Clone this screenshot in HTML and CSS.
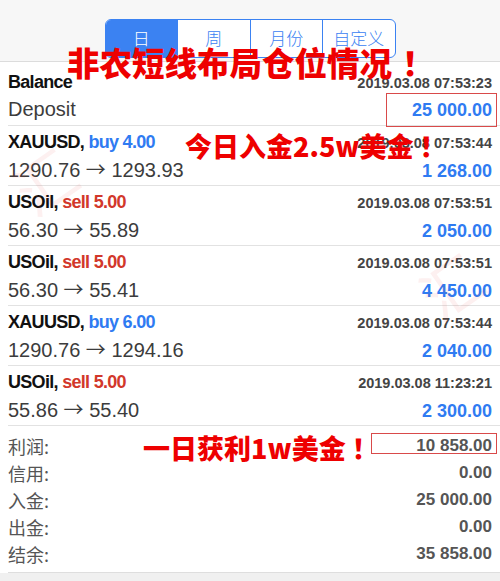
FILE: index.html
```html
<!DOCTYPE html>
<html lang="zh">
<head>
<meta charset="utf-8">
<title>History</title>
<link rel="stylesheet" href="styles.css">
</head>
<body>
<div class="screen">
  <header class="topbar">
    <div class="tabs">
      <div class="tab active">日</div>
      <div class="tab">周</div>
      <div class="tab">月份</div>
      <div class="tab">自定义</div>
    </div>
  </header>

  <div class="list">
    <div class="row row-first">
      <div class="line1"><span class="name">Balance</span><span class="date">2019.03.08 07:53:23</span></div>
      <div class="line2"><span class="desc">Deposit</span><span class="amount">25 000.00</span></div>
    </div>
    <div class="row">
      <div class="line1"><span class="name">XAUUSD, <span class="buy">buy 4.00</span></span><span class="date">2019.03.08 07:53:44</span></div>
      <div class="line2"><span class="desc">1290.76 <span class="arrow">→</span> 1293.93</span><span class="amount">1 268.00</span></div>
    </div>
    <div class="row">
      <div class="line1"><span class="name">USOil, <span class="sell">sell 5.00</span></span><span class="date">2019.03.08 07:53:51</span></div>
      <div class="line2"><span class="desc">56.30 <span class="arrow">→</span> 55.89</span><span class="amount">2 050.00</span></div>
    </div>
    <div class="row">
      <div class="line1"><span class="name">USOil, <span class="sell">sell 5.00</span></span><span class="date">2019.03.08 07:53:51</span></div>
      <div class="line2"><span class="desc">56.30 <span class="arrow">→</span> 55.41</span><span class="amount">4 450.00</span></div>
    </div>
    <div class="row">
      <div class="line1"><span class="name">XAUUSD, <span class="buy">buy 6.00</span></span><span class="date">2019.03.08 07:53:44</span></div>
      <div class="line2"><span class="desc">1290.76 <span class="arrow">→</span> 1294.16</span><span class="amount">2 040.00</span></div>
    </div>
    <div class="row">
      <div class="line1"><span class="name">USOil, <span class="sell">sell 5.00</span></span><span class="date">2019.03.08 11:23:21</span></div>
      <div class="line2"><span class="desc">55.86 <span class="arrow">→</span> 55.40</span><span class="amount">2 300.00</span></div>
    </div>
  </div>

  <div class="summary">
    <div class="srow"><span class="slabel">利润:</span><span class="svalue">10 858.00</span></div>
    <div class="srow"><span class="slabel">信用:</span><span class="svalue">0.00</span></div>
    <div class="srow"><span class="slabel">入金:</span><span class="svalue">25 000.00</span></div>
    <div class="srow"><span class="slabel">出金:</span><span class="svalue">0.00</span></div>
    <div class="srow"><span class="slabel">结余:</span><span class="svalue">35 858.00</span></div>
  </div>
  <div class="footer"></div>

  <span class="wm wm-left">汇</span>
  <span class="wm wm-right">汇</span>

  <div class="mark-box mark-box-deposit"></div>
  <div class="mark-box mark-box-profit"></div>
  <div class="note note-title">非农短线布局仓位情况<span class="bang bang-lg">！</span></div>
  <div class="note note-deposit">今日入金2.5w美金<span class="bang">！</span></div>
  <div class="note note-profit">一日获利1w美金<span class="bang">！</span></div>
</div>
</body>
</html>
```

FILE: styles.css
```css
html, body {
  margin: 0;
  padding: 0;
  background: #ffffff;
}

.screen {
  position: relative;
  width: 500px;
  height: 581px;
  overflow: hidden;
  background: #ffffff;
  font-family: "Liberation Sans", Arial, "Noto Sans CJK SC", sans-serif;
}

.topbar {
  height: 62px;
  box-sizing: border-box;
  padding-top: 19px;
  background: #f7f7f7;
  border-bottom: 1px solid #dcdcdc;
  display: flex;
  justify-content: center;
  align-items: flex-start;
}

.tabs {
  display: flex;
  width: 291px;
  height: 39px;
  box-sizing: border-box;
  border: 1px solid #3b82f2;
  border-radius: 6px;
  overflow: hidden;
  background: #ffffff;
}

.tab {
  flex: 1;
  display: flex;
  align-items: center;
  justify-content: center;
  padding-bottom: 2px;
  font-family: "Noto Sans CJK SC", sans-serif;
  font-size: 17px;
  font-weight: 300;
  color: #3b82f2;
  border-left: 1px solid #3b82f2;
}

.tab:first-child {
  border-left: none;
}

.tab.active {
  background: #3b82f2;
  color: #ffffff;
}

.list {
  display: flex;
  flex-direction: column;
}

.row {
  margin-left: 8px;
  padding: 3px 8px 2px 0;
  border-bottom: 1px solid #e2e2e2;
}

.row-first {
  padding-top: 7px;
}

.line1, .line2 {
  display: flex;
  justify-content: space-between;
  align-items: baseline;
}

.line1 {
  height: 26px;
  line-height: 26px;
}

.line2 {
  height: 28px;
  line-height: 28px;
}

.name {
  font-size: 18px;
  font-weight: bold;
  color: #111111;
  letter-spacing: -0.7px;
}

.buy {
  color: #2f7bf2;
}

.sell {
  color: #d2382b;
}

.date {
  font-size: 14.5px;
  font-weight: bold;
  color: #444444;
}

.desc {
  font-size: 20px;
  color: #3c3c3c;
}

.arrow {
  font-family: "Noto Sans CJK SC", sans-serif;
  font-size: 20px;
}

.amount {
  font-size: 18px;
  font-weight: bold;
  color: #2f7bf2;
}

.summary {
  margin-left: 8px;
  padding: 6px 8px 5px 0;
  border-bottom: 1px solid #dedede;
}

.srow {
  height: 27px;
  display: flex;
  justify-content: space-between;
  align-items: center;
}

.slabel {
  font-family: "Noto Sans CJK SC", sans-serif;
  font-size: 18px;
  color: #555555;
}

.svalue {
  font-size: 17px;
  font-weight: bold;
  color: #555555;
}

.footer {
  height: 12px;
  background: #f0f0f0;
}

.wm {
  position: absolute;
  font-family: "Noto Sans CJK SC", sans-serif;
  font-size: 60px;
  line-height: 1;
  color: rgba(225, 70, 70, 0.08);
  transform: rotate(-35deg);
  pointer-events: none;
}

.wm-left {
  left: 14px;
  top: 150px;
}

.wm-right {
  left: 420px;
  top: 255px;
}

.mark-box {
  position: absolute;
  box-sizing: border-box;
  border: 1px solid #d94a4a;
}

.mark-box-deposit {
  left: 386px;
  top: 93px;
  width: 111px;
  height: 34px;
}

.mark-box-profit {
  left: 371px;
  top: 433px;
  width: 126px;
  height: 21px;
}

.note {
  position: absolute;
  font-family: "Noto Sans CJK SC", sans-serif;
  font-weight: 900;
  color: #ee0000;
  line-height: 1;
  white-space: nowrap;
}

.bang {
  font-family: "Noto Sans CJK JP", sans-serif;
  margin-left: 6px;
}

.bang-lg {
  margin-left: 10px;
}

.note-title {
  left: 67px;
  top: 46px;
  font-size: 32.5px;
}

.note-deposit {
  left: 185px;
  top: 132px;
  font-size: 27px;
}

.note-profit {
  left: 143px;
  top: 434px;
  font-size: 27px;
}
```
